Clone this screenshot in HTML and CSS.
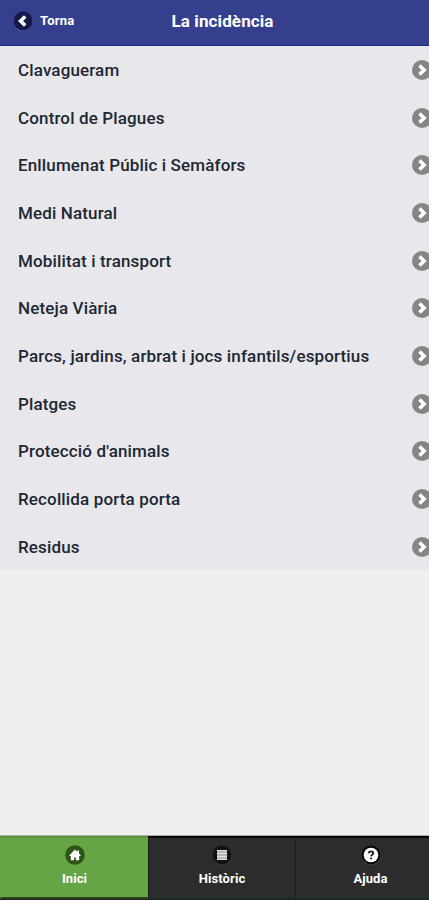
FILE: index.html
```html
<!DOCTYPE html>
<html lang="ca">
<head>
<meta charset="utf-8">
<title>La incidència</title>
<link rel="stylesheet" href="styles.css">
</head>
<body>
<svg width="0" height="0" class="defs">
  <symbol id="go" viewBox="0 0 20 20"><circle cx="10" cy="10" r="10" fill="#858585"/><path d="M7.500 5.400l4.600 4.600L7.500 14.600" fill="none" stroke="#fff" stroke-width="3.600"/></symbol>
</svg>
<div class="screen">
  <header class="header">
    <a class="back">
      <svg class="back-icon" viewBox="0 0 20 20"><circle cx="10" cy="10.6" r="9.6" fill="#5a5898"/><circle cx="10" cy="10" r="9.5" fill="#15184a"/><path d="M12.200 5.400L7.600 10l4.600 4.600" fill="none" stroke="#fff" stroke-width="3.600"/></svg>
      <span>Torna</span>
    </a>
    <h1 class="title">La incidència</h1>
  </header>
  <ul class="list">
    <li><span>Clavagueram</span><svg><use href="#go"/></svg></li>
    <li><span>Control de Plagues</span><svg><use href="#go"/></svg></li>
    <li><span>Enllumenat Públic i Semàfors</span><svg><use href="#go"/></svg></li>
    <li><span>Medi Natural</span><svg><use href="#go"/></svg></li>
    <li><span>Mobilitat i transport</span><svg><use href="#go"/></svg></li>
    <li><span>Neteja Viària</span><svg><use href="#go"/></svg></li>
    <li><span>Parcs, jardins, arbrat i jocs infantils/esportius</span><svg><use href="#go"/></svg></li>
    <li><span>Platges</span><svg><use href="#go"/></svg></li>
    <li><span>Protecció d'animals</span><svg><use href="#go"/></svg></li>
    <li><span>Recollida porta porta</span><svg><use href="#go"/></svg></li>
    <li><span>Residus</span><svg><use href="#go"/></svg></li>
  </ul>
  <nav class="tabs">
    <a class="tab active">
      <svg viewBox="0 0 20 20"><circle cx="10" cy="10" r="9.8" fill="#2c5517"/><path d="M10 4.600L4.400 10.200V11H5.800V15.200h3.300V12.400h1.800v2.800h3.300V11h1.400V10.200L14 8.600V5.600h-1.700v1.300z" fill="#fff"/></svg>
      <span>Inici</span>
    </a>
    <a class="tab">
      <svg viewBox="0 0 20 20"><circle cx="10" cy="10.600" r="9.400" fill="#484848"/><circle cx="10" cy="10" r="9.400" fill="#111"/><path d="M5 5h10v10h-10z" fill="#b5b5b5"/><path d="M5 5.500h10M5 8.500h10M5 11.500h10M5 14.500h10" stroke="#e2e2e2" stroke-width="1"/></svg>
      <span>Històric</span>
    </a>
    <a class="tab">
      <svg viewBox="0 0 20 20"><circle cx="10" cy="10.600" r="9.400" fill="#666"/><circle cx="10" cy="10" r="9.400" fill="#080808"/><circle cx="10" cy="10" r="7.300" fill="#fff"/><path d="M7.700 8.300C7.800 5.800 12.400 5.800 12.300 8.200 12.200 9.700 10.200 9.700 10.100 11.400" fill="none" stroke="#222" stroke-width="1.900"/><circle cx="10.100" cy="13.500" r="1.100" fill="#222"/></svg>
      <span>Ajuda</span>
    </a>
  </nav>
</div>
</body>
</html>
```
FILE: styles.css
```css
* { box-sizing: border-box; }

html, body {
  margin: 0;
  height: 100%;
  overflow: hidden;
}

body { font-family: Roboto, sans-serif; }

.defs { display: block; }

.screen {
  display: flex;
  flex-direction: column;
  width: 445px;
  height: 900px;
  background: #efefef;
}

.header {
  display: grid;
  grid-template-columns: 1fr auto 1fr;
  align-items: center;
  height: 46px;
  padding: 0 13px 4px;
  background: #363f8d;
  border-bottom: 1px solid #202c83;
  color: #fff;
}

.back {
  display: flex;
  align-items: center;
  gap: 7px;
  font-size: 13px;
  font-weight: 700;
  letter-spacing: 0.2px;
}

.back-icon { width: 20px; height: 20px; }

.title {
  margin: 0;
  font-size: 17px;
  line-height: 22px;
  font-weight: 700;
  letter-spacing: 0.12px;
}

.list {
  margin: 0;
  padding: 0;
  list-style: none;
  background: #e8e7ec;
  color: #1d2832;
}

.list li {
  display: flex;
  align-items: center;
  justify-content: space-between;
  height: 47.68px;
  padding: 0 13px 0 18px;
  font-size: 17px;
  font-weight: 500;
  letter-spacing: 0.14px;
}

.list svg { width: 20px; height: 20px; }

.tabs {
  display: grid;
  grid-template-columns: 148px 147px 150px;
  height: 65px;
  margin-top: auto;
  border-top: 1px solid #aaa;
  border-bottom: 1px solid #202020;
  background: #2c2c2c;
  color: #fff;
}

.tab {
  display: flex;
  flex-direction: column;
  align-items: center;
  gap: 6px;
  padding-top: 7px;
  border-top: 2px solid #080808;
  border-bottom: 2px solid #202d30;
  border-left: 1px solid #1b1b1b;
  font-size: 13px;
  line-height: 16px;
  font-weight: 700;
  letter-spacing: 0.1px;
}

.tab svg { width: 20px; height: 20px; }

.tab.active {
  background: #66a546;
  border-left-color: #66a546;
  border-top-color: #5c913e;
  border-bottom-color: #2c441c;
}
```
